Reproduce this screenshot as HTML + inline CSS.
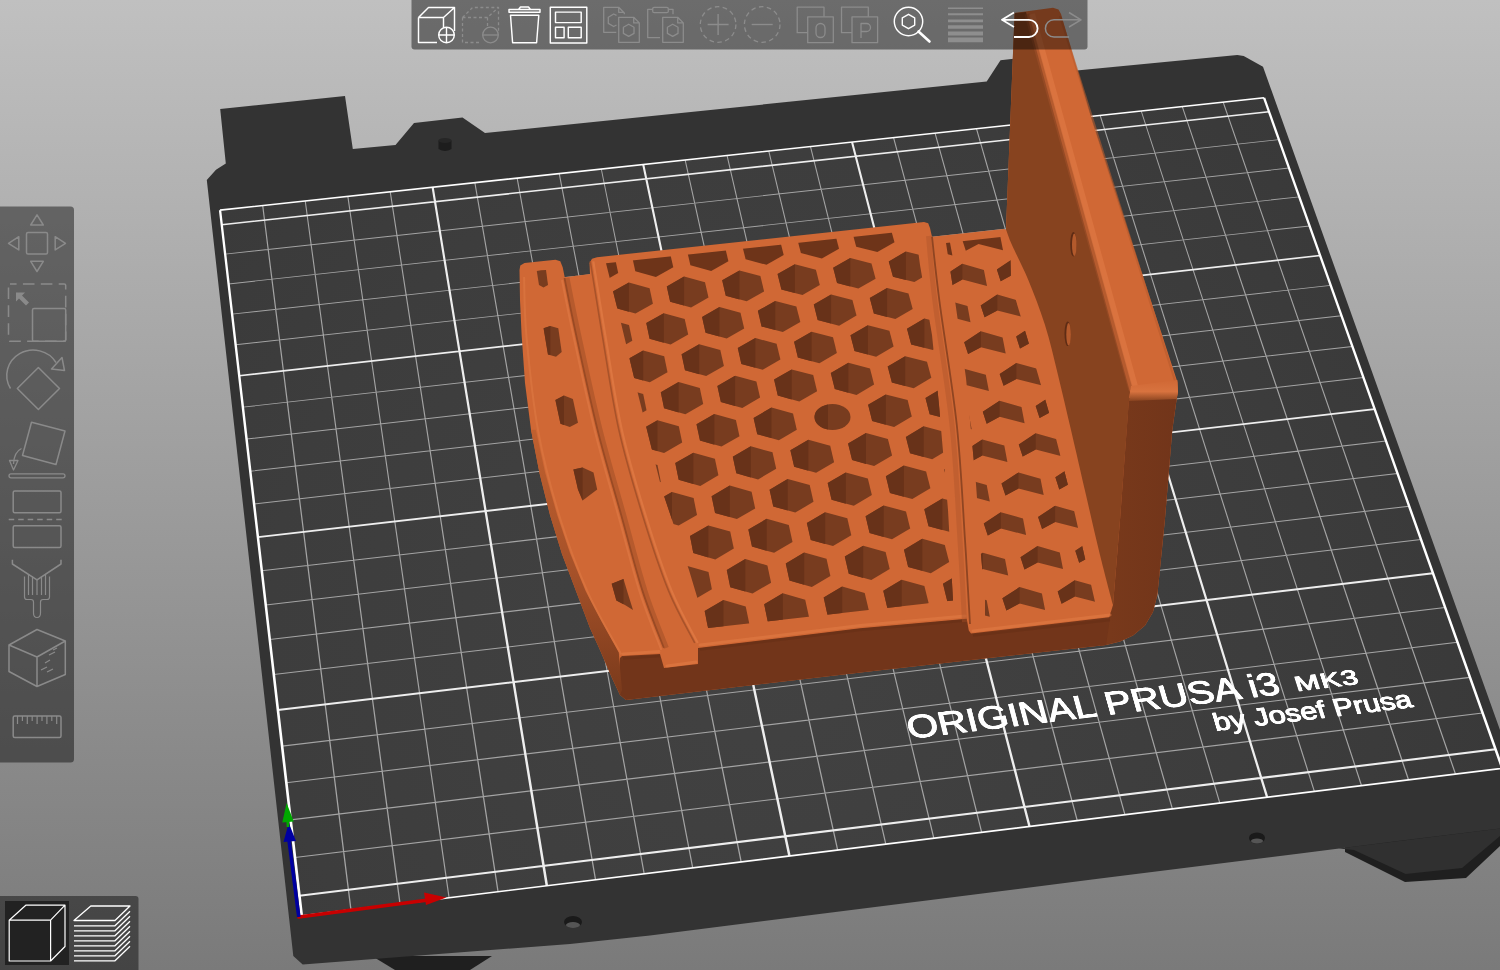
<!DOCTYPE html>
<html><head><meta charset="utf-8"><style>
html,body{margin:0;padding:0;width:1500px;height:970px;overflow:hidden;background:#9d9d9d;font-family:"Liberation Sans",sans-serif;}
#wrap{position:relative;width:1500px;height:970px;}
</style></head><body><div id="wrap">
<svg width="1500" height="970" viewBox="0 0 1500 970" style="position:absolute;left:0;top:0">
<defs><linearGradient id="bg" x1="0" y1="0" x2="0" y2="1"><stop offset="0" stop-color="#c0c0c0"/><stop offset="1" stop-color="#7a7a7a"/></linearGradient></defs>
<rect width="1500" height="970" fill="url(#bg)"/>
<polygon points="1345,852 1405,882 1466,878 1500,846 1500,820 1345,840" fill="#1f1f1f"/>
<polygon points="1338.7,848.5 1500,828.4 1500,836 1462,868 1405.7,874 1354,850" fill="#303030"/>
<polygon points="372,956 395,970 470,970 492,956" fill="#1f1f1f"/>
<polygon points="206.8,180.0 216.0,169.7 225.8,163.5 220.2,108.9 345.0,96.0 352.8,149.0 395.5,145.0 414.0,122.9 462.5,117.5 485.0,133.0 986.7,81.6 1000.5,60.3 1030.0,57.0 1030.0,75.0 1237.3,55.0 1243.7,56.0 1263.0,66.7 1500.0,730.0 1500.0,828.4 1400.0,840.7 1300.0,853.6 1100.0,878.5 650.0,935.5 570.0,944.0 302.7,964.5 293.3,956.0" fill="#333333"/>
<defs><radialGradient id="surfg" gradientUnits="userSpaceOnUse" cx="760" cy="640" r="820"><stop offset="0" stop-color="#424242"/><stop offset="0.6" stop-color="#3d3d3d"/><stop offset="1" stop-color="#383838"/></radialGradient></defs>
<polygon points="301.7,915.9 1502.3,768.3 1264.0,97.7 220.0,210.1" fill="url(#surfg)"/>
<path d="M350.3,909.9 L351.6,909.8 L263.3,205.5 L262.1,205.6Z M399.4,903.9 L400.7,903.7 L305.8,200.9 L304.7,201.0Z M448.5,897.8 L449.7,897.7 L348.4,196.3 L347.3,196.4Z M497.4,891.8 L498.7,891.7 L390.8,191.7 L389.7,191.9Z M594.9,879.8 L596.2,879.7 L475.4,182.6 L474.3,182.8Z M643.6,873.9 L644.8,873.7 L517.7,178.1 L516.6,178.2Z M692.1,867.9 L693.3,867.8 L559.8,173.6 L558.7,173.7Z M740.5,862.0 L741.8,861.8 L601.8,169.0 L600.8,169.1Z M837.0,850.1 L838.3,849.9 L685.7,160.0 L684.6,160.1Z M885.2,844.2 L886.4,844.0 L727.6,155.5 L726.5,155.6Z M933.2,838.3 L934.4,838.1 L769.3,151.0 L768.2,151.1Z M981.1,832.4 L982.3,832.2 L811.0,146.5 L809.9,146.6Z M1076.6,820.6 L1077.9,820.5 L894.1,137.6 L893.0,137.7Z M1124.3,814.8 L1125.5,814.6 L935.6,133.1 L934.5,133.2Z M1171.8,809.0 L1173.0,808.8 L977.0,128.6 L975.9,128.8Z M1219.2,803.1 L1220.4,803.0 L1018.3,124.2 L1017.2,124.3Z M1313.8,791.5 L1315.0,791.4 L1100.7,115.3 L1099.6,115.4Z M1360.9,785.7 L1362.1,785.6 L1141.7,110.9 L1140.7,111.0Z M1407.9,779.9 L1409.2,779.8 L1182.8,106.5 L1181.7,106.6Z M1454.9,774.2 L1456.1,774.0 L1223.7,102.1 L1222.6,102.2Z M295.0,858.1 L1482.9,713.6 L1482.5,712.5 L294.9,857.0Z M290.7,820.4 L1470.2,677.9 L1469.8,676.8 L290.5,819.3Z M286.4,783.3 L1457.7,642.7 L1457.3,641.7 L286.2,782.2Z M282.1,746.7 L1445.3,608.0 L1445.0,607.0 L282.0,745.6Z M273.8,675.0 L1421.2,540.0 L1420.8,539.0 L273.7,674.0Z M269.8,640.0 L1409.4,506.7 L1409.0,505.7 L269.7,638.9Z M265.8,605.4 L1397.7,473.9 L1397.3,472.9 L265.7,604.4Z M261.8,571.3 L1386.2,441.5 L1385.8,440.5 L261.7,570.3Z M254.1,504.5 L1363.6,378.0 L1363.3,377.0 L254.0,503.5Z M250.3,471.7 L1352.6,346.9 L1352.2,345.9 L250.2,470.8Z M246.6,439.5 L1341.7,316.2 L1341.3,315.2 L246.5,438.5Z M242.9,407.6 L1330.9,285.8 L1330.6,284.9 L242.8,406.7Z M235.7,345.2 L1309.8,226.4 L1309.5,225.5 L235.6,344.3Z M232.1,314.6 L1299.4,197.3 L1299.1,196.4 L232.0,313.7Z M228.6,284.4 L1289.2,168.5 L1288.9,167.6 L228.5,283.5Z M225.2,254.6 L1279.1,140.1 L1278.8,139.2 L225.1,253.7Z" fill="#a4a4a4"/>
<path d="M545.6,885.9 L548.1,885.6 L433.7,187.1 L431.6,187.4Z M788.2,856.1 L790.7,855.8 L644.3,164.5 L642.2,164.7Z M1028.3,826.6 L1030.7,826.3 L853.1,142.0 L851.0,142.2Z M1266.0,797.4 L1268.3,797.1 L1060.0,119.7 L1057.9,119.9Z M299.5,896.8 L1495.9,750.3 L1495.2,748.3 L299.3,894.7Z M278.0,711.1 L1433.3,574.2 L1432.7,572.3 L277.8,709.1Z M258.0,538.1 L1375.0,409.9 L1374.3,408.2 L257.8,536.2Z M239.3,376.6 L1320.4,256.3 L1319.8,254.7 L239.1,374.9Z M221.8,225.5 L1269.2,112.4 L1268.7,110.9 L221.6,223.9Z" fill="#eeeeee"/>
<path d="M300.4,916.1 L303.1,915.7 L221.2,210.0 L218.9,210.3Z M1501.0,768.5 L1503.6,768.2 L1265.2,97.6 L1262.9,97.9Z M301.8,916.7 L1502.6,769.1 L1502.0,767.6 L301.6,915.1Z M220.1,210.9 L1264.3,98.5 L1263.8,97.0 L219.9,209.3Z" fill="#ffffff"/>
<ellipse cx="573" cy="922" rx="9" ry="6" fill="#1a1a1a"/><ellipse cx="573" cy="925" rx="7" ry="3" fill="#555"/>
<ellipse cx="1257" cy="838" rx="8" ry="5.5" fill="#1a1a1a"/><ellipse cx="1257" cy="841" rx="6" ry="2.5" fill="#555"/>
<path d="M438.5,140.5 V149 Q445,153 451.5,149 V140.5Z" fill="#1d1d1d"/><ellipse cx="445" cy="140.5" rx="6.5" ry="2.6" fill="#262626"/>
<path d="M298.8,917 L432,899.5" stroke="#c80000" stroke-width="3.6" stroke-linecap="round"/>
<polygon points="424,892.5 446.5,897.5 426,905" fill="#c80000"/>
<path d="M298.8,917 L288.75,838" stroke="#0000a0" stroke-width="3.6"/>
<polygon points="283.5,842 288.75,823 296,841" fill="#0000a0"/>
<path d="M288,827 L287.5,819" stroke="#00a800" stroke-width="2.6"/>
<polygon points="282.3,822.5 286.6,803 293.8,821.5" fill="#00a800"/>
<defs>
<clipPath id="mainclip"><polygon points="606.0,263.3 903.0,231.6 918.0,250.0 920.0,265.0 932.0,335.0 939.0,405.0 948.0,510.0 953.0,600.5 708.0,628.0 704.0,620.0 689.0,570.0 662.0,490.0 638.0,394.0 621.0,323.0"/></clipPath>
<clipPath id="chevclip"><polygon points="1010.0,236.0 1011.0,284.0 1032.0,354.0 1052.0,423.0 1070.5,495.0 1087.0,567.0 1098.0,615.0 985.0,628.0 985.0,600.0 981.0,555.0 976.0,484.0 966.0,378.0 955.5,304.0 946.0,243.0"/></clipPath>
<linearGradient id="rwall" gradientUnits="userSpaceOnUse" x1="1110" y1="0" x2="1176" y2="0"><stop offset="0" stop-color="#78391b"/><stop offset="1" stop-color="#72351a"/></linearGradient>
<linearGradient id="pledge" x1="0" y1="0" x2="1" y2="0"><stop offset="0" stop-color="#a0502a"/><stop offset="0.6" stop-color="#e07a45"/><stop offset="1" stop-color="#d8713d"/></linearGradient>
<linearGradient id="pfront" x1="0" y1="0" x2="0" y2="1"><stop offset="0" stop-color="#d06835"/><stop offset="0.55" stop-color="#d8733f"/><stop offset="1" stop-color="#8a4420"/></linearGradient>
<linearGradient id="railwall" gradientUnits="userSpaceOnUse" x1="0" y1="430" x2="0" y2="690"><stop offset="0" stop-color="#c0602f"/><stop offset="0.55" stop-color="#a55129"/><stop offset="1" stop-color="#7c3b1c"/></linearGradient>
</defs>
<polygon points="519.5,270.0 520.3,265.5 524.5,263.0 555.5,259.8 560.3,261.2 562.7,267.3 564.7,277.3 590.0,274.0 589.5,263.0 592.0,258.7 597.0,257.2 924.0,222.0 928.2,223.3 930.0,228.0 932.0,236.7 1003.4,229.0 1006.0,229.5 1014.6,13.0 1053.0,7.8 1058.5,9.5 1061.0,14.0 1092.0,120.0 1177.4,382.0 1178.0,392.0 1176.8,398.0 1172.3,430.0 1164.9,519.7 1157.4,594.6 1153.0,612.0 1145.0,625.5 1133.0,635.5 1120.0,641.5 1106.0,645.0 880.0,670.3 626.0,700.0 620.0,695.0 612.0,678.0 600.0,650.0 590.0,628.0 576.0,590.9 562.0,554.0 550.0,515.0 539.5,473.0 531.0,429.7 525.0,383.0 521.6,334.8 520.0,300.0" fill="#d06835" />
<path d="M1006,229.5 L1014.6,13 L1026,12 L1130,392 L1129,400 L1120,520 L1113,605  C1110.8,596.7 1104.5,573.3 1100.0,555.0 C1095.5,536.7 1090.8,515.8 1086.0,495.0 C1081.2,474.2 1075.7,450.0 1071.0,430.0 C1066.3,410.0 1062.3,392.5 1058.0,375.0 C1053.7,357.5 1050.0,340.8 1045.0,325.0 C1040.0,309.2 1033.8,293.3 1028.3,280.0 C1022.8,266.7 1015.7,253.4 1012.0,245.0 C1008.3,236.6 1007.0,232.1 1006.0,229.5Z" fill="#87431f"/>
<polygon points="1129.0,398.0 1176.8,398.0 1172.3,430.0 1164.9,519.7 1157.4,594.6 1153.0,612.0 1145.0,625.5 1133.0,635.5 1120.0,641.5 1106.0,645.0 1100.0,646.0 1111.0,611.5 1113.0,605.0 1120.0,520.0" fill="url(#rwall)" />
<path d="M1027,14 L1131,390" stroke="#a2512a" stroke-width="5" opacity="0.55"/>
<path d="M1032,14 L1136,390" stroke="#e27b46" stroke-width="6" opacity="0.6"/>
<path d="M1060,16 L1176,384" stroke="#b95c2d" stroke-width="2.2" opacity="0.6"/>
<polygon points="1131.0,386.0 1177.4,380.0 1178.0,392.0 1176.8,399.0 1129.0,401.0" fill="url(#pfront)" />
<ellipse cx="1073.4" cy="244.2" rx="3.2" ry="12.3" fill="#5e2c15"/><ellipse cx="1074.3" cy="244.8" rx="2.3" ry="11.2" fill="#b35a2c"/>
<ellipse cx="1067.7" cy="333.7" rx="3.2" ry="12.3" fill="#5e2c15"/><ellipse cx="1068.6" cy="334.3" rx="2.3" ry="11.2" fill="#b35a2c"/>
<polygon points="626.0,700.0 620.0,695.0 618.0,680.0 620.0,658.0 622.0,656.0 660.0,654.0 664.0,668.0 698.0,664.0 698.0,648.0 860.0,628.3 966.7,618.7 968.8,630.4 971.0,633.6 1111.0,617.0 1111.0,611.5 1106.0,645.0 880.0,670.3" fill="#72351a" />
<path d="M700,645 L860,625.5 L965,616 M623,654 L659,651.5 M667,666 L696,662 M973,631 L1110,615" fill="none" stroke="#e27b46" stroke-width="3" opacity="0.55" stroke-linecap="round"/>
<path d="M700,649.5 L860,630 L966,620.5 M623,658.5 L660,656 M973,635.5 L1110,620" fill="none" stroke="#5e2b14" stroke-width="2.5" opacity="0.35"/>
<polygon points="531.0,429.7 539.5,473.0 550.0,515.0 562.0,554.0 576.0,590.9 590.0,628.0 600.0,650.0 612.0,678.0 620.0,695.0 622.0,690.0 620.0,668.0 618.8,652.5 602.0,622.0 585.6,590.9 570.0,553.0 557.2,515.0 545.0,472.0 535.8,429.7" fill="url(#railwall)" />
<polygon points="536.8,271.0 541.0,270.2 546.0,270.0 548.0,285.0 543.5,287.5 539.0,285.0" fill="#783c1f" />
<polygon points="550.4,326.0 558.3,328.3 561.7,352.0 556.0,356.7 548.0,354.4 543.6,328.3" fill="#783c1f" /><polygon points="550.4,326.0 550.4,355.1 548.0,354.4 543.6,328.3" fill="#683219" />
<polygon points="564.0,395.6 572.9,399.0 578.0,422.8 569.8,426.9 560.5,423.8 555.4,400.0" fill="#783c1f" /><polygon points="564.0,395.6 564.0,425.0 560.5,423.8 555.4,400.0" fill="#683219" />
<polygon points="582.6,467.4 593.5,472.6 597.2,489.6 582.6,500.5 578.0,489.6 573.4,469.6" fill="#783c1f" /><polygon points="582.6,467.4 582.6,500.5 578.0,489.6 573.4,469.6" fill="#683219" />
<polygon points="623.5,579.0 628.0,594.0 633.0,610.0 625.0,605.0 616.4,600.4 611.7,583.8" fill="#783c1f" /><polygon points="623.5,579.0 623.5,604.2 616.4,600.4 611.7,583.8" fill="#683219" />
<path d="M567.0,278.0 C568.9,287.5 573.1,309.5 578.6,334.8 C584.1,360.1 592.5,399.7 600.0,429.7 C607.5,459.7 616.2,488.1 623.7,515.0 C631.2,541.9 637.9,568.8 645.0,590.9 C652.1,613.0 662.8,638.3 666.3,647.8" fill="none" stroke="#a04e26" stroke-width="5" opacity="0.55"/>
<path d="M564.5,278.0 C566.4,287.5 570.6,309.5 576.1,334.8 C581.6,360.1 590.0,399.7 597.5,429.7 C605.0,459.7 613.7,488.1 621.2,515.0 C628.7,541.9 635.4,568.8 642.5,590.9 C649.6,613.0 660.2,638.3 663.8,647.8" fill="none" stroke="#9a4a24" stroke-width="1.8"/>
<path d="M562.0,280.0 C563.9,289.5 568.1,311.5 573.6,336.8 C579.1,362.1 587.5,401.7 595.0,431.7 C602.5,461.7 611.2,490.1 618.7,517.0 C626.2,543.9 632.9,570.8 640.0,592.9 C647.1,615.0 657.8,640.3 661.3,649.8" fill="none" stroke="#dc7642" stroke-width="2" opacity="0.8"/>
<path d="M590.3,261.3 C592.3,273.6 597.5,306.7 602.2,334.8 C607.0,362.9 612.1,399.7 618.8,429.7 C625.5,459.7 634.2,488.1 642.5,515.0 C650.8,541.9 659.9,569.6 668.6,590.9 C677.3,612.2 690.4,634.3 694.7,643.0" fill="none" stroke="#a9532a" stroke-width="1.6"/>
<path d="M593.3,261.3 C595.3,273.6 600.5,306.7 605.2,334.8 C610.0,362.9 615.1,399.7 621.8,429.7 C628.5,459.7 637.2,488.1 645.5,515.0 C653.8,541.9 662.9,569.6 671.6,590.9 C680.3,612.2 693.4,634.3 697.7,643.0" fill="none" stroke="#de7843" stroke-width="2.2" opacity="0.9"/>
<path d="M524.1,277.0 C524.5,287.0 524.1,311.0 526.5,336.8 C528.9,362.6 532.8,401.7 538.3,431.7 C543.8,461.7 551.4,490.1 559.7,517.0 C568.0,543.9 577.8,570.0 588.1,592.9 C598.4,615.8 615.8,644.2 621.3,654.5" fill="none" stroke="#dc7642" stroke-width="2" opacity="0.7"/>
<g clip-path="url(#mainclip)"><polygon points="506.3,227.8 526.4,233.4 529.3,248.5 512.0,258.0 491.8,252.4 489.0,237.2" fill="#6e3419" /><polygon points="560.5,222.3 580.8,227.9 583.9,242.9 566.6,252.4 546.3,246.8 543.3,231.7" fill="#6e3419" /><polygon points="614.8,216.6 635.2,222.1 638.5,237.2 621.3,246.7 600.8,241.1 597.7,226.1" fill="#6e3419" /><polygon points="669.2,210.9 689.7,216.3 693.2,231.3 676.1,240.8 655.5,235.3 652.1,220.3" fill="#6e3419" /><polygon points="723.7,205.0 744.4,210.3 748.0,225.3 730.9,234.9 710.2,229.4 706.7,214.5" fill="#6e3419" /><polygon points="778.3,198.9 799.1,204.2 802.9,219.1 785.9,228.7 765.1,223.4 761.3,208.5" fill="#6e3419" /><polygon points="833.0,192.8 853.9,198.0 857.9,212.9 840.9,222.5 820.0,217.2 816.1,202.3" fill="#6e3419" /><polygon points="887.8,186.5 908.8,191.7 913.0,206.5 896.1,216.1 875.0,210.9 870.9,196.1" fill="#6e3419" /><polygon points="942.6,180.1 963.8,185.2 968.2,200.0 951.3,209.6 930.1,204.5 925.8,189.7" fill="#6e3419" /><polygon points="997.6,173.6 1018.8,178.6 1023.4,193.3 1006.6,203.0 985.3,197.9 980.9,183.2" fill="#6e3419" /><polygon points="539.8,257.9 560.2,263.6 563.2,278.9 545.8,288.6 525.4,282.8 522.4,267.5" fill="#6e3419" /><polygon points="594.5,252.3 615.0,257.9 618.2,273.1 600.8,282.8 580.3,277.1 577.2,261.8" fill="#6e3419" /><polygon points="649.2,246.4 669.8,252.0 673.3,267.2 655.9,276.9 635.3,271.3 632.0,256.0" fill="#6e3419" /><polygon points="704.1,240.5 724.8,246.0 728.4,261.2 711.2,270.9 690.4,265.3 686.9,250.1" fill="#6e3419" /><polygon points="759.0,234.5 779.9,239.9 783.7,255.0 766.5,264.8 745.6,259.3 741.9,244.1" fill="#6e3419" /><polygon points="814.1,228.3 835.1,233.6 839.0,248.7 821.9,258.5 800.9,253.1 797.0,237.9" fill="#6e3419" /><polygon points="869.2,222.0 890.3,227.2 894.5,242.3 877.4,252.1 856.2,246.7 852.2,231.7" fill="#6e3419" /><polygon points="924.4,215.5 945.6,220.7 950.0,235.7 933.0,245.6 911.7,240.3 907.5,225.2" fill="#6e3419" /><polygon points="979.7,209.0 1001.1,214.1 1005.6,229.1 988.7,238.9 967.3,233.7 962.9,218.7" fill="#6e3419" /><polygon points="1035.1,202.3 1056.6,207.4 1061.3,222.3 1044.4,232.2 1022.9,227.0 1018.3,212.0" fill="#6e3419" /><polygon points="518.8,294.1 539.2,299.9 542.2,315.4 524.5,325.2 504.1,319.4 501.2,303.8" fill="#783c1f" /><polygon points="518.8,294.1 518.8,323.6 504.1,319.4 501.2,303.8" fill="#683219" /><polygon points="573.8,288.4 594.4,294.1 597.5,309.6 580.0,319.4 559.3,313.6 556.3,298.1" fill="#783c1f" /><polygon points="573.8,288.4 573.8,317.7 559.3,313.6 556.3,298.1" fill="#683219" /><polygon points="628.9,282.6 649.6,288.2 652.9,303.7 635.5,313.5 614.7,307.8 611.5,292.3" fill="#783c1f" /><polygon points="628.9,282.6 628.9,311.7 614.7,307.8 611.5,292.3" fill="#683219" /><polygon points="684.1,276.6 705.0,282.2 708.5,297.6 691.1,307.5 670.2,301.8 666.8,286.4" fill="#783c1f" /><polygon points="684.1,276.6 684.1,305.6 670.2,301.8 666.8,286.4" fill="#683219" /><polygon points="739.5,270.5 760.4,276.1 764.1,291.4 746.7,301.3 725.8,295.7 722.2,280.3" fill="#783c1f" /><polygon points="739.5,270.5 739.5,299.4 725.8,295.7 722.2,280.3" fill="#683219" /><polygon points="794.9,264.3 815.9,269.8 819.8,285.1 802.5,295.0 781.4,289.5 777.6,274.1" fill="#783c1f" /><polygon points="794.9,264.3 794.9,293.0 781.4,289.5 777.6,274.1" fill="#683219" /><polygon points="850.3,258.0 871.5,263.4 875.6,278.7 858.4,288.6 837.1,283.1 833.2,267.8" fill="#783c1f" /><polygon points="850.3,258.0 850.3,286.5 837.1,283.1 833.2,267.8" fill="#683219" /><polygon points="905.9,251.5 927.2,256.8 931.5,272.1 914.4,282.1 893.0,276.7 888.8,261.4" fill="#783c1f" /><polygon points="905.9,251.5 905.9,279.9 893.0,276.7 888.8,261.4" fill="#683219" /><polygon points="961.6,244.9 983.0,250.2 987.5,265.4 970.4,275.4 948.9,270.0 944.5,254.8" fill="#783c1f" /><polygon points="961.6,244.9 961.6,273.2 948.9,270.0 944.5,254.8" fill="#683219" /><polygon points="1017.3,238.2 1038.9,243.4 1043.6,258.6 1026.5,268.6 1004.9,263.3 1000.4,248.1" fill="#783c1f" /><polygon points="1017.3,238.2 1017.3,266.4 1004.9,263.3 1000.4,248.1" fill="#683219" /><polygon points="552.8,325.1 573.4,330.9 576.5,346.7 558.7,356.6 538.0,350.7 535.1,334.9" fill="#783c1f" /><polygon points="552.8,325.1 552.8,354.9 538.0,350.7 535.1,334.9" fill="#683219" /><polygon points="608.3,319.2 629.0,325.0 632.3,340.7 614.6,350.7 593.8,344.8 590.7,329.1" fill="#783c1f" /><polygon points="608.3,319.2 608.3,348.9 593.8,344.8 590.7,329.1" fill="#683219" /><polygon points="663.8,313.3 684.7,319.0 688.2,334.6 670.6,344.6 649.6,338.8 646.3,323.1" fill="#783c1f" /><polygon points="663.8,313.3 663.8,342.7 649.6,338.8 646.3,323.1" fill="#683219" /><polygon points="719.5,307.1 740.5,312.8 744.2,328.4 726.7,338.4 705.6,332.7 702.1,317.1" fill="#783c1f" /><polygon points="719.5,307.1 719.5,336.5 705.6,332.7 702.1,317.1" fill="#683219" /><polygon points="775.3,300.9 796.4,306.5 800.3,322.1 782.8,332.1 761.6,326.5 757.9,310.8" fill="#783c1f" /><polygon points="775.3,300.9 775.3,330.1 761.6,326.5 757.9,310.8" fill="#683219" /><polygon points="831.1,294.6 852.4,300.1 856.5,315.6 839.1,325.7 817.7,320.1 813.8,304.5" fill="#783c1f" /><polygon points="831.1,294.6 831.1,323.6 817.7,320.1 813.8,304.5" fill="#683219" /><polygon points="887.1,288.1 908.5,293.5 912.7,309.0 895.4,319.1 873.9,313.6 869.8,298.0" fill="#783c1f" /><polygon points="887.1,288.1 887.1,317.0 873.9,313.6 869.8,298.0" fill="#683219" /><polygon points="943.1,281.5 964.7,286.8 969.1,302.3 951.8,312.4 930.2,307.0 925.9,291.5" fill="#783c1f" /><polygon points="943.1,281.5 943.1,310.2 930.2,307.0 925.9,291.5" fill="#683219" /><polygon points="999.3,274.7 1020.9,280.0 1025.5,295.5 1008.3,305.6 986.6,300.2 982.1,284.7" fill="#783c1f" /><polygon points="999.3,274.7 999.3,303.4 986.6,300.2 982.1,284.7" fill="#683219" /><polygon points="1055.5,267.8 1077.3,273.1 1082.1,288.5 1065.0,298.7 1043.1,293.3 1038.4,277.9" fill="#783c1f" /><polygon points="1055.5,267.8 1055.5,296.4 1043.1,293.3 1038.4,277.9" fill="#683219" /><polygon points="531.3,362.3 552.1,368.2 555.0,384.2 537.1,394.3 516.3,388.3 513.5,372.3" fill="#783c1f" /><polygon points="531.3,362.3 531.3,392.6 516.3,388.3 513.5,372.3" fill="#683219" /><polygon points="587.2,356.4 608.1,362.3 611.2,378.3 593.4,388.3 572.5,382.4 569.4,366.4" fill="#783c1f" /><polygon points="587.2,356.4 587.2,386.6 572.5,382.4 569.4,366.4" fill="#683219" /><polygon points="643.2,350.4 664.2,356.3 667.5,372.2 649.8,382.3 628.7,376.4 625.5,360.4" fill="#783c1f" /><polygon points="643.2,350.4 643.2,380.4 628.7,376.4 625.5,360.4" fill="#683219" /><polygon points="699.2,344.3 720.3,350.1 723.9,365.9 706.2,376.1 685.0,370.2 681.6,354.3" fill="#783c1f" /><polygon points="699.2,344.3 699.2,374.2 685.0,370.2 681.6,354.3" fill="#683219" /><polygon points="755.4,338.1 776.6,343.8 780.4,359.6 762.7,369.8 741.4,364.0 737.8,348.1" fill="#783c1f" /><polygon points="755.4,338.1 755.4,367.8 741.4,364.0 737.8,348.1" fill="#683219" /><polygon points="811.6,331.7 833.0,337.3 836.9,353.1 819.4,363.3 797.9,357.6 794.1,341.8" fill="#783c1f" /><polygon points="811.6,331.7 811.6,361.2 797.9,357.6 794.1,341.8" fill="#683219" /><polygon points="867.9,325.2 889.4,330.7 893.6,346.5 876.1,356.7 854.5,351.1 850.5,335.3" fill="#783c1f" /><polygon points="867.9,325.2 867.9,354.6 854.5,351.1 850.5,335.3" fill="#683219" /><polygon points="924.4,318.5 946.0,324.1 950.3,339.8 932.9,350.0 911.2,344.4 907.0,328.7" fill="#783c1f" /><polygon points="924.4,318.5 924.4,347.8 911.2,344.4 907.0,328.7" fill="#683219" /><polygon points="980.9,311.8 1002.6,317.2 1007.2,332.9 989.8,343.2 968.0,337.7 963.6,322.0" fill="#783c1f" /><polygon points="980.9,311.8 980.9,340.9 968.0,337.7 963.6,322.0" fill="#683219" /><polygon points="1037.5,304.9 1059.4,310.3 1064.1,326.0 1046.8,336.3 1024.9,330.8 1020.2,315.1" fill="#783c1f" /><polygon points="1037.5,304.9 1037.5,333.9 1024.9,330.8 1020.2,315.1" fill="#683219" /><polygon points="565.8,394.2 586.7,400.2 589.8,416.3 571.8,426.5 550.8,420.5 547.8,404.3" fill="#783c1f" /><polygon points="565.8,394.2 565.8,424.8 550.8,420.5 547.8,404.3" fill="#683219" /><polygon points="622.1,388.1 643.2,394.1 646.5,410.2 628.5,420.5 607.4,414.5 604.2,398.3" fill="#783c1f" /><polygon points="622.1,388.1 622.1,418.6 607.4,414.5 604.2,398.3" fill="#683219" /><polygon points="678.6,382.0 699.8,387.9 703.2,404.0 685.4,414.3 664.1,408.3 660.8,392.2" fill="#783c1f" /><polygon points="678.6,382.0 678.6,412.4 664.1,408.3 660.8,392.2" fill="#683219" /><polygon points="735.1,375.7 756.4,381.6 760.1,397.6 742.3,407.9 720.9,402.0 717.4,385.9" fill="#783c1f" /><polygon points="735.1,375.7 735.1,405.9 720.9,402.0 717.4,385.9" fill="#683219" /><polygon points="791.7,369.4 813.2,375.1 817.1,391.2 799.3,401.5 777.8,395.6 774.1,379.6" fill="#783c1f" /><polygon points="791.7,369.4 791.7,399.4 777.8,395.6 774.1,379.6" fill="#683219" /><polygon points="848.4,362.8 870.0,368.5 874.1,384.5 856.5,394.9 834.8,389.1 830.8,373.1" fill="#783c1f" /><polygon points="848.4,362.8 848.4,392.7 834.8,389.1 830.8,373.1" fill="#683219" /><polygon points="905.2,356.2 927.0,361.8 931.3,377.8 913.7,388.2 891.9,382.5 887.7,366.5" fill="#783c1f" /><polygon points="905.2,356.2 905.2,386.0 891.9,382.5 887.7,366.5" fill="#683219" /><polygon points="962.1,349.4 984.0,355.0 988.5,370.9 971.0,381.3 949.0,375.7 944.7,359.7" fill="#783c1f" /><polygon points="962.1,349.4 962.1,379.1 949.0,375.7 944.7,359.7" fill="#683219" /><polygon points="1019.1,342.5 1041.1,348.0 1045.8,363.9 1028.4,374.4 1006.3,368.8 1001.7,352.8" fill="#783c1f" /><polygon points="1019.1,342.5 1019.1,372.0 1006.3,368.8 1001.7,352.8" fill="#683219" /><polygon points="1076.2,335.5 1098.3,341.0 1103.2,356.8 1085.9,367.3 1063.7,361.8 1058.9,345.8" fill="#783c1f" /><polygon points="1076.2,335.5 1076.2,364.9 1063.7,361.8 1058.9,345.8" fill="#683219" /><polygon points="543.9,432.4 565.0,438.5 567.9,454.9 549.7,465.3 528.6,459.1 525.8,442.6" fill="#783c1f" /><polygon points="543.9,432.4 543.9,463.6 528.6,459.1 525.8,442.6" fill="#683219" /><polygon points="600.7,426.4 621.8,432.4 625.0,448.8 606.9,459.2 585.6,453.0 582.6,436.6" fill="#783c1f" /><polygon points="600.7,426.4 600.7,457.4 585.6,453.0 582.6,436.6" fill="#683219" /><polygon points="657.5,420.2 678.8,426.2 682.2,442.6 664.1,453.0 642.8,446.9 639.5,430.5" fill="#783c1f" /><polygon points="657.5,420.2 657.5,451.1 642.8,446.9 639.5,430.5" fill="#683219" /><polygon points="714.4,414.0 735.9,419.9 739.5,436.2 721.5,446.6 700.0,440.6 696.5,424.3" fill="#783c1f" /><polygon points="714.4,414.0 714.4,444.7 700.0,440.6 696.5,424.3" fill="#683219" /><polygon points="771.5,407.6 793.0,413.4 796.8,429.7 778.9,440.2 757.3,434.2 753.6,417.9" fill="#783c1f" /><polygon points="771.5,407.6 771.5,438.1 757.3,434.2 753.6,417.9" fill="#683219" /><polygon points="885.8,394.4 907.6,400.1 911.8,416.4 894.1,426.9 872.2,421.0 868.1,404.8" fill="#783c1f" /><polygon points="885.8,394.4 885.8,424.7 872.2,421.0 868.1,404.8" fill="#683219" /><polygon points="943.1,387.6 965.1,393.3 969.5,409.5 951.8,420.0 929.7,414.2 925.5,398.0" fill="#783c1f" /><polygon points="943.1,387.6 943.1,417.7 929.7,414.2 925.5,398.0" fill="#683219" /><polygon points="1000.5,380.7 1022.6,386.3 1027.2,402.5 1009.6,413.1 987.4,407.3 982.9,391.1" fill="#783c1f" /><polygon points="1000.5,380.7 1000.5,410.7 987.4,407.3 982.9,391.1" fill="#683219" /><polygon points="1057.9,373.7 1080.2,379.2 1085.0,395.4 1067.5,406.0 1045.2,400.3 1040.5,384.1" fill="#783c1f" /><polygon points="1057.9,373.7 1057.9,403.5 1045.2,400.3 1040.5,384.1" fill="#683219" /><polygon points="578.8,465.1 600.1,471.3 603.2,487.9 584.8,498.4 563.5,492.2 560.6,475.5" fill="#783c1f" /><polygon points="578.8,465.1 578.8,496.6 563.5,492.2 560.6,475.5" fill="#683219" /><polygon points="636.1,459.0 657.5,465.1 660.8,481.7 642.5,492.2 621.0,486.0 617.9,469.4" fill="#783c1f" /><polygon points="636.1,459.0 636.1,490.3 621.0,486.0 617.9,469.4" fill="#683219" /><polygon points="693.4,452.7 714.9,458.8 718.4,475.3 700.3,485.9 678.7,479.7 675.3,463.1" fill="#783c1f" /><polygon points="693.4,452.7 693.4,483.9 678.7,479.7 675.3,463.1" fill="#683219" /><polygon points="750.8,446.3 772.5,452.3 776.2,468.8 758.1,479.4 736.4,473.3 732.8,456.8" fill="#783c1f" /><polygon points="750.8,446.3 750.8,477.4 736.4,473.3 732.8,456.8" fill="#683219" /><polygon points="808.4,439.8 830.2,445.7 834.1,462.2 816.1,472.8 794.2,466.8 790.4,450.3" fill="#783c1f" /><polygon points="808.4,439.8 808.4,470.7 794.2,466.8 790.4,450.3" fill="#683219" /><polygon points="866.0,433.1 887.9,439.0 892.1,455.5 874.1,466.1 852.1,460.1 848.1,443.6" fill="#783c1f" /><polygon points="866.0,433.1 866.0,463.9 852.1,460.1 848.1,443.6" fill="#683219" /><polygon points="923.7,426.3 945.8,432.2 950.1,448.6 932.2,459.2 910.1,453.3 905.9,436.9" fill="#783c1f" /><polygon points="923.7,426.3 923.7,457.0 910.1,453.3 905.9,436.9" fill="#683219" /><polygon points="981.5,419.4 1003.7,425.2 1008.3,441.6 990.5,452.3 968.2,446.4 963.7,430.0" fill="#783c1f" /><polygon points="981.5,419.4 981.5,449.9 968.2,446.4 963.7,430.0" fill="#683219" /><polygon points="1039.4,412.4 1061.7,418.1 1066.5,434.5 1048.8,445.2 1026.3,439.4 1021.7,423.0" fill="#783c1f" /><polygon points="1039.4,412.4 1039.4,442.8 1026.3,439.4 1021.7,423.0" fill="#683219" /><polygon points="1097.3,405.2 1119.8,410.9 1124.8,427.2 1107.2,438.0 1084.6,432.2 1079.8,415.9" fill="#783c1f" /><polygon points="1097.3,405.2 1097.3,435.5 1084.6,432.2 1079.8,415.9" fill="#683219" /><polygon points="556.5,504.4 577.9,510.7 580.9,527.6 562.3,538.1 540.9,531.8 538.1,514.9" fill="#783c1f" /><polygon points="556.5,504.4 556.5,536.4 540.9,531.8 538.1,514.9" fill="#683219" /><polygon points="614.2,498.3 635.7,504.5 638.9,521.3 620.4,531.9 598.9,525.6 595.8,508.8" fill="#783c1f" /><polygon points="614.2,498.3 614.2,530.1 598.9,525.6 595.8,508.8" fill="#683219" /><polygon points="672.0,492.0 693.6,498.1 697.0,515.0 678.6,525.6 656.9,519.4 653.7,502.5" fill="#783c1f" /><polygon points="672.0,492.0 672.0,523.7 656.9,519.4 653.7,502.5" fill="#683219" /><polygon points="729.8,485.6 751.6,491.7 755.2,508.5 736.9,519.1 715.1,512.9 711.6,496.2" fill="#783c1f" /><polygon points="729.8,485.6 729.8,517.1 715.1,512.9 711.6,496.2" fill="#683219" /><polygon points="787.7,479.0 809.7,485.1 813.5,501.8 795.3,512.6 773.3,506.4 769.6,489.7" fill="#783c1f" /><polygon points="787.7,479.0 787.7,510.5 773.3,506.4 769.6,489.7" fill="#683219" /><polygon points="845.8,472.4 867.8,478.4 871.9,495.1 853.8,505.8 831.6,499.8 827.7,483.0" fill="#783c1f" /><polygon points="845.8,472.4 845.8,503.7 831.6,499.8 827.7,483.0" fill="#683219" /><polygon points="903.9,465.6 926.1,471.5 930.4,488.2 912.3,499.0 890.0,493.0 885.9,476.3" fill="#783c1f" /><polygon points="903.9,465.6 903.9,496.7 890.0,493.0 885.9,476.3" fill="#683219" /><polygon points="962.1,458.7 984.4,464.6 988.9,481.2 971.0,492.0 948.6,486.1 944.2,469.4" fill="#783c1f" /><polygon points="962.1,458.7 962.1,489.7 948.6,486.1 944.2,469.4" fill="#683219" /><polygon points="1020.4,451.7 1042.9,457.5 1047.6,474.1 1029.7,485.0 1007.1,479.0 1002.6,462.4" fill="#783c1f" /><polygon points="1020.4,451.7 1020.4,482.5 1007.1,479.0 1002.6,462.4" fill="#683219" /><polygon points="1078.8,444.5 1101.4,450.3 1106.3,466.9 1088.5,477.7 1065.8,471.9 1061.1,455.3" fill="#783c1f" /><polygon points="1078.8,444.5 1078.8,475.2 1065.8,471.9 1061.1,455.3" fill="#683219" /><polygon points="591.9,538.0 613.5,544.4 616.6,561.4 597.9,572.2 576.3,565.8 573.3,548.7" fill="#783c1f" /><polygon points="591.9,538.0 591.9,570.4 576.3,565.8 573.3,548.7" fill="#683219" /><polygon points="650.1,531.8 671.8,538.1 675.1,555.1 656.6,565.9 634.8,559.5 631.6,542.4" fill="#783c1f" /><polygon points="650.1,531.8 650.1,564.0 634.8,559.5 631.6,542.4" fill="#683219" /><polygon points="708.4,525.4 730.2,531.6 733.8,548.6 715.3,559.4 693.3,553.1 690.0,536.1" fill="#783c1f" /><polygon points="708.4,525.4 708.4,557.4 693.3,553.1 690.0,536.1" fill="#683219" /><polygon points="766.7,518.8 788.8,525.0 792.5,542.0 774.1,552.8 752.0,546.6 748.4,529.6" fill="#783c1f" /><polygon points="766.7,518.8 766.7,550.7 752.0,546.6 748.4,529.6" fill="#683219" /><polygon points="825.2,512.2 847.3,518.3 851.3,535.3 833.0,546.1 810.8,539.9 806.9,522.9" fill="#783c1f" /><polygon points="825.2,512.2 825.2,543.9 810.8,539.9 806.9,522.9" fill="#683219" /><polygon points="883.7,505.4 906.0,511.5 910.2,528.4 892.0,539.3 869.6,533.1 865.6,516.2" fill="#783c1f" /><polygon points="883.7,505.4 883.7,537.0 869.6,533.1 865.6,516.2" fill="#683219" /><polygon points="942.4,498.5 964.8,504.5 969.2,521.4 951.1,532.3 928.6,526.2 924.3,509.3" fill="#783c1f" /><polygon points="942.4,498.5 942.4,530.0 928.6,526.2 924.3,509.3" fill="#683219" /><polygon points="1001.1,491.5 1023.7,497.4 1028.3,514.3 1010.2,525.3 987.6,519.2 983.1,502.3" fill="#783c1f" /><polygon points="1001.1,491.5 1001.1,522.8 987.6,519.2 983.1,502.3" fill="#683219" /><polygon points="1059.9,484.3 1082.6,490.2 1087.5,507.1 1069.5,518.1 1046.7,512.1 1042.0,495.2" fill="#783c1f" /><polygon points="1059.9,484.3 1059.9,515.5 1046.7,512.1 1042.0,495.2" fill="#683219" /><polygon points="1118.8,477.0 1141.7,482.9 1146.8,499.7 1128.9,510.7 1105.9,504.8 1101.0,487.9" fill="#783c1f" /><polygon points="1118.8,477.0 1118.8,508.1 1105.9,504.8 1101.0,487.9" fill="#683219" /><polygon points="569.2,578.3 590.9,584.8 593.9,602.1 575.0,612.9 553.2,606.4 550.4,589.1" fill="#783c1f" /><polygon points="569.2,578.3 569.2,611.2 553.2,606.4 550.4,589.1" fill="#683219" /><polygon points="627.8,572.1 649.6,578.5 652.8,595.7 634.1,606.6 612.2,600.1 609.1,582.8" fill="#783c1f" /><polygon points="627.8,572.1 627.8,604.8 612.2,600.1 609.1,582.8" fill="#683219" /><polygon points="686.5,565.7 708.5,572.0 711.9,589.3 693.2,600.2 671.2,593.7 667.9,576.5" fill="#783c1f" /><polygon points="686.5,565.7 686.5,598.2 671.2,593.7 667.9,576.5" fill="#683219" /><polygon points="745.3,559.1 767.4,565.4 771.1,582.7 752.5,593.6 730.3,587.2 726.8,570.0" fill="#783c1f" /><polygon points="745.3,559.1 745.3,591.5 730.3,587.2 726.8,570.0" fill="#683219" /><polygon points="804.2,552.5 826.5,558.7 830.4,575.9 811.8,586.9 789.5,580.6 785.8,563.4" fill="#783c1f" /><polygon points="804.2,552.5 804.2,584.8 789.5,580.6 785.8,563.4" fill="#683219" /><polygon points="863.2,545.7 885.6,551.9 889.7,569.1 871.3,580.1 848.8,573.8 844.8,556.6" fill="#783c1f" /><polygon points="863.2,545.7 863.2,577.9 848.8,573.8 844.8,556.6" fill="#683219" /><polygon points="922.3,538.8 944.8,545.0 949.2,562.1 930.8,573.2 908.2,566.9 904.0,549.8" fill="#783c1f" /><polygon points="922.3,538.8 922.3,570.8 908.2,566.9 904.0,549.8" fill="#683219" /><polygon points="981.4,531.8 1004.1,537.9 1008.7,555.0 990.4,566.1 967.6,559.9 963.2,542.8" fill="#783c1f" /><polygon points="981.4,531.8 981.4,563.7 967.6,559.9 963.2,542.8" fill="#683219" /><polygon points="1040.7,524.7 1063.5,530.7 1068.3,547.8 1050.1,558.9 1027.2,552.8 1022.6,535.7" fill="#783c1f" /><polygon points="1040.7,524.7 1040.7,556.4 1027.2,552.8 1022.6,535.7" fill="#683219" /><polygon points="1100.0,517.4 1123.0,523.4 1128.0,540.4 1109.9,551.6 1086.9,545.5 1082.0,528.4" fill="#783c1f" /><polygon points="1100.0,517.4 1100.0,549.0 1086.9,545.5 1082.0,528.4" fill="#683219" /><polygon points="605.1,612.8 627.0,619.4 630.1,636.9 611.1,647.9 589.1,641.3 586.2,623.7" fill="#783c1f" /><polygon points="605.1,612.8 605.1,646.0 589.1,641.3 586.2,623.7" fill="#683219" /><polygon points="664.2,606.5 686.3,612.9 689.6,630.4 670.7,641.4 648.6,634.9 645.4,617.4" fill="#783c1f" /><polygon points="664.2,606.5 664.2,639.5 648.6,634.9 645.4,617.4" fill="#683219" /><polygon points="723.5,600.0 745.7,606.4 749.3,623.8 730.4,634.9 708.1,628.4 704.7,610.9" fill="#783c1f" /><polygon points="723.5,600.0 723.5,632.9 708.1,628.4 704.7,610.9" fill="#683219" /><polygon points="782.8,593.3 805.2,599.7 809.0,617.1 790.2,628.2 767.8,621.8 764.2,604.3" fill="#783c1f" /><polygon points="782.8,593.3 782.8,626.1 767.8,621.8 764.2,604.3" fill="#683219" /><polygon points="842.2,586.6 864.7,592.9 868.8,610.3 850.1,621.4 827.5,615.0 823.7,597.6" fill="#783c1f" /><polygon points="842.2,586.6 842.2,619.2 827.5,615.0 823.7,597.6" fill="#683219" /><polygon points="901.7,579.7 924.4,586.0 928.7,603.3 910.1,614.5 887.4,608.2 883.3,590.7" fill="#783c1f" /><polygon points="901.7,579.7 901.7,612.2 887.4,608.2 883.3,590.7" fill="#683219" /><polygon points="961.4,572.7 984.2,578.9 988.7,596.3 970.2,607.5 947.3,601.2 943.0,583.8" fill="#783c1f" /><polygon points="961.4,572.7 961.4,605.0 947.3,601.2 943.0,583.8" fill="#683219" /><polygon points="1021.1,565.5 1044.0,571.7 1048.7,589.1 1030.3,600.3 1007.3,594.0 1002.7,576.7" fill="#783c1f" /><polygon points="1021.1,565.5 1021.1,597.8 1007.3,594.0 1002.7,576.7" fill="#683219" /><polygon points="1080.9,558.3 1103.9,564.4 1108.9,581.7 1090.6,593.0 1067.4,586.8 1062.6,569.4" fill="#783c1f" /><polygon points="1080.9,558.3 1080.9,590.4 1067.4,586.8 1062.6,569.4" fill="#683219" /><polygon points="1140.7,550.9 1164.0,556.9 1169.2,574.3 1150.9,585.5 1127.6,579.4 1122.6,562.1" fill="#783c1f" /><polygon points="1140.7,550.9 1140.7,582.9 1127.6,579.4 1122.6,562.1" fill="#683219" /><polygon points="581.9,654.1 603.9,660.8 606.9,678.5 587.7,689.6 565.6,682.9 562.7,665.1" fill="#783c1f" /><polygon points="581.9,654.1 581.9,687.8 565.6,682.9 562.7,665.1" fill="#683219" /><polygon points="641.5,647.8 663.6,654.4 666.9,672.1 647.8,683.2 625.5,676.5 622.4,658.8" fill="#783c1f" /><polygon points="641.5,647.8 641.5,681.3 625.5,676.5 622.4,658.8" fill="#683219" /><polygon points="701.2,641.3 723.5,647.8 727.0,665.5 707.9,676.7 685.5,670.1 682.2,652.4" fill="#783c1f" /><polygon points="701.2,641.3 701.2,674.7 685.5,670.1 682.2,652.4" fill="#683219" /><polygon points="761.0,634.7 783.4,641.2 787.1,658.8 768.2,670.0 745.6,663.5 742.1,645.8" fill="#783c1f" /><polygon points="761.0,634.7 761.0,667.9 745.6,663.5 742.1,645.8" fill="#683219" /><polygon points="820.8,627.9 843.5,634.4 847.4,652.0 828.6,663.3 805.9,656.7 802.1,639.1" fill="#783c1f" /><polygon points="820.8,627.9 820.8,661.0 805.9,656.7 802.1,639.1" fill="#683219" /><polygon points="880.8,621.1 903.6,627.5 907.8,645.1 889.0,656.4 866.1,649.9 862.1,632.2" fill="#783c1f" /><polygon points="880.8,621.1 880.8,654.0 866.1,649.9 862.1,632.2" fill="#683219" /><polygon points="940.9,614.1 963.8,620.4 968.2,638.0 949.5,649.3 926.5,642.9 922.3,625.3" fill="#783c1f" /><polygon points="940.9,614.1 940.9,646.9 926.5,642.9 922.3,625.3" fill="#683219" /><polygon points="1001.0,607.0 1024.1,613.2 1028.7,630.8 1010.2,642.2 987.0,635.8 982.5,618.2" fill="#783c1f" /><polygon points="1001.0,607.0 1001.0,639.7 987.0,635.8 982.5,618.2" fill="#683219" /><polygon points="1061.3,599.7 1084.5,605.9 1089.4,623.5 1070.9,634.9 1047.6,628.6 1042.9,611.0" fill="#783c1f" /><polygon points="1061.3,599.7 1061.3,632.3 1047.6,628.6 1042.9,611.0" fill="#683219" /><polygon points="1121.6,592.3 1145.0,598.5 1150.1,616.1 1131.7,627.5 1108.2,621.2 1103.3,603.6" fill="#783c1f" /><polygon points="1121.6,592.3 1121.6,624.8 1108.2,621.2 1103.3,603.6" fill="#683219" /><ellipse cx="832.5" cy="417" rx="18" ry="13" fill="#783c1f"/><path d="M814.5,417 A18,13 0 0 1 828,404.4 L828,429.6 A18,13 0 0 1 814.5,417Z" fill="#683219"/></g>
<g clip-path="url(#chevclip)"><polygon points="793.7,212.9 815.1,219.0 818.1,234.9 793.7,228.5 781.1,235.4 777.3,223.6" fill="#6e3419" /><polygon points="843.8,208.0 865.2,214.1 868.2,230.0 843.8,223.7 831.2,230.5 827.4,218.8" fill="#6e3419" /><polygon points="893.9,203.2 915.3,209.2 918.3,225.2 893.9,218.8 881.4,225.6 877.5,213.9" fill="#6e3419" /><polygon points="944.0,198.3 965.4,204.4 968.4,220.3 944.0,214.0 931.5,220.8 927.7,209.1" fill="#6e3419" /><polygon points="994.2,193.5 1015.5,199.5 1018.6,215.4 994.2,209.1 981.6,215.9 977.8,204.2" fill="#6e3419" /><polygon points="1044.3,188.6 1065.6,194.7 1068.7,210.6 1044.3,204.2 1031.7,211.1 1027.9,199.4" fill="#6e3419" /><polygon points="1094.4,183.8 1115.7,189.8 1118.8,205.7 1094.4,199.4 1081.8,206.2 1078.0,194.5" fill="#6e3419" /><polygon points="826.7,243.4 848.2,249.5 851.2,265.4 826.7,259.1 814.1,265.9 810.3,254.2" fill="#6e3419" /><polygon points="877.3,238.4 898.8,244.4 901.8,260.4 877.3,254.0 864.7,260.9 860.9,249.1" fill="#6e3419" /><polygon points="927.9,233.3 949.4,239.4 952.4,255.4 927.9,249.0 915.2,255.9 911.4,244.1" fill="#6e3419" /><polygon points="978.5,228.3 999.9,234.4 1003.0,250.3 978.5,244.0 965.8,250.8 962.0,239.1" fill="#6e3419" /><polygon points="1029.0,223.3 1050.5,229.3 1053.5,245.3 1029.0,238.9 1016.4,245.8 1012.6,234.0" fill="#6e3419" /><polygon points="1079.6,218.2 1101.1,224.3 1104.1,240.3 1079.6,233.9 1067.0,240.8 1063.2,229.0" fill="#6e3419" /><polygon points="1130.2,213.2 1151.7,219.3 1154.7,235.2 1130.2,228.9 1117.5,235.7 1113.7,224.0" fill="#6e3419" /><polygon points="809.2,279.4 830.8,285.5 833.8,301.5 809.2,295.2 796.5,302.0 792.7,290.2" fill="#783c1f" /><polygon points="809.2,279.4 809.2,295.2 796.5,302.0 792.7,290.2" fill="#683219" /><polygon points="860.3,274.2 881.8,280.3 884.9,296.3 860.3,289.9 847.6,296.8 843.7,285.0" fill="#783c1f" /><polygon points="860.3,274.2 860.3,289.9 847.6,296.8 843.7,285.0" fill="#683219" /><polygon points="911.3,269.0 932.9,275.1 935.9,291.1 911.3,284.7 898.6,291.6 894.8,279.8" fill="#783c1f" /><polygon points="911.3,269.0 911.3,284.7 898.6,291.6 894.8,279.8" fill="#683219" /><polygon points="962.4,263.8 983.9,269.9 987.0,285.9 962.4,279.5 949.7,286.4 945.8,274.6" fill="#783c1f" /><polygon points="962.4,263.8 962.4,279.5 949.7,286.4 945.8,274.6" fill="#683219" /><polygon points="1013.4,258.6 1034.9,264.7 1038.0,280.7 1013.4,274.3 1000.7,281.2 996.9,269.4" fill="#783c1f" /><polygon points="1013.4,258.6 1013.4,274.3 1000.7,281.2 996.9,269.4" fill="#683219" /><polygon points="1064.4,253.4 1086.0,259.5 1089.0,275.5 1064.4,269.1 1051.7,276.0 1047.9,264.2" fill="#783c1f" /><polygon points="1064.4,253.4 1064.4,269.1 1051.7,276.0 1047.9,264.2" fill="#683219" /><polygon points="1115.5,248.2 1137.0,254.3 1140.1,270.3 1115.5,263.9 1102.8,270.8 1098.9,259.0" fill="#783c1f" /><polygon points="1115.5,248.2 1115.5,263.9 1102.8,270.8 1098.9,259.0" fill="#683219" /><polygon points="842.8,310.7 864.5,316.9 867.5,333.0 842.8,326.5 830.1,333.5 826.2,321.6" fill="#783c1f" /><polygon points="842.8,310.7 842.8,326.5 830.1,333.5 826.2,321.6" fill="#683219" /><polygon points="894.3,305.4 916.0,311.5 919.0,327.6 894.3,321.2 881.6,328.1 877.7,316.2" fill="#783c1f" /><polygon points="894.3,305.4 894.3,321.2 881.6,328.1 877.7,316.2" fill="#683219" /><polygon points="945.8,300.0 967.5,306.1 970.5,322.2 945.8,315.8 933.1,322.7 929.2,310.8" fill="#783c1f" /><polygon points="945.8,300.0 945.8,315.8 933.1,322.7 929.2,310.8" fill="#683219" /><polygon points="997.3,294.6 1019.0,300.7 1022.0,316.8 997.3,310.4 984.6,317.3 980.7,305.5" fill="#783c1f" /><polygon points="997.3,294.6 997.3,310.4 984.6,317.3 980.7,305.5" fill="#683219" /><polygon points="1048.8,289.2 1070.5,295.3 1073.5,311.4 1048.8,305.0 1036.1,311.9 1032.2,300.1" fill="#783c1f" /><polygon points="1048.8,289.2 1048.8,305.0 1036.1,311.9 1032.2,300.1" fill="#683219" /><polygon points="1100.4,283.8 1122.0,289.9 1125.1,306.0 1100.4,299.6 1087.6,306.5 1083.8,294.7" fill="#783c1f" /><polygon points="1100.4,283.8 1100.4,299.6 1087.6,306.5 1083.8,294.7" fill="#683219" /><polygon points="1151.9,278.4 1173.5,284.6 1176.6,300.7 1151.9,294.2 1139.1,301.2 1135.3,289.3" fill="#783c1f" /><polygon points="1151.9,278.4 1151.9,294.2 1139.1,301.2 1135.3,289.3" fill="#683219" /><polygon points="824.9,348.0 846.7,354.1 849.7,370.3 824.9,363.8 812.1,370.8 808.3,358.9" fill="#783c1f" /><polygon points="824.9,348.0 824.9,363.8 812.1,370.8 808.3,358.9" fill="#683219" /><polygon points="876.9,342.4 898.6,348.6 901.7,364.7 876.9,358.3 864.1,365.2 860.2,353.3" fill="#783c1f" /><polygon points="876.9,342.4 876.9,358.3 864.1,365.2 860.2,353.3" fill="#683219" /><polygon points="928.9,336.8 950.6,343.0 953.7,359.2 928.9,352.7 916.1,359.7 912.2,347.8" fill="#783c1f" /><polygon points="928.9,336.8 928.9,352.7 916.1,359.7 912.2,347.8" fill="#683219" /><polygon points="980.9,331.3 1002.6,337.4 1005.7,353.6 980.9,347.2 968.1,354.1 964.2,342.2" fill="#783c1f" /><polygon points="980.9,331.3 980.9,347.2 968.1,354.1 964.2,342.2" fill="#683219" /><polygon points="1032.8,325.7 1054.6,331.9 1057.6,348.0 1032.8,341.6 1020.0,348.5 1016.2,336.6" fill="#783c1f" /><polygon points="1032.8,325.7 1032.8,341.6 1020.0,348.5 1016.2,336.6" fill="#683219" /><polygon points="1084.8,320.2 1106.5,326.3 1109.6,342.5 1084.8,336.0 1072.0,343.0 1068.1,331.1" fill="#783c1f" /><polygon points="1084.8,320.2 1084.8,336.0 1072.0,343.0 1068.1,331.1" fill="#683219" /><polygon points="1136.8,314.6 1158.5,320.8 1161.6,336.9 1136.8,330.5 1124.0,337.4 1120.1,325.5" fill="#783c1f" /><polygon points="1136.8,314.6 1136.8,330.5 1124.0,337.4 1120.1,325.5" fill="#683219" /><polygon points="859.1,380.1 880.9,386.3 884.0,402.6 859.1,396.1 846.2,403.1 842.4,391.1" fill="#783c1f" /><polygon points="859.1,380.1 859.1,396.1 846.2,403.1 842.4,391.1" fill="#683219" /><polygon points="911.5,374.4 933.3,380.6 936.4,396.8 911.5,390.3 898.7,397.3 894.8,385.4" fill="#783c1f" /><polygon points="911.5,374.4 911.5,390.3 898.7,397.3 894.8,385.4" fill="#683219" /><polygon points="964.0,368.7 985.8,374.8 988.9,391.1 964.0,384.6 951.1,391.6 947.2,379.6" fill="#783c1f" /><polygon points="964.0,368.7 964.0,384.6 951.1,391.6 947.2,379.6" fill="#683219" /><polygon points="1016.4,362.9 1038.2,369.1 1041.3,385.3 1016.4,378.9 1003.6,385.8 999.7,373.9" fill="#783c1f" /><polygon points="1016.4,362.9 1016.4,378.9 1003.6,385.8 999.7,373.9" fill="#683219" /><polygon points="1068.8,357.2 1090.7,363.4 1093.7,379.6 1068.8,373.1 1056.0,380.1 1052.1,368.2" fill="#783c1f" /><polygon points="1068.8,357.2 1068.8,373.1 1056.0,380.1 1052.1,368.2" fill="#683219" /><polygon points="1121.3,351.5 1143.1,357.6 1146.2,373.9 1121.3,367.4 1108.4,374.4 1104.6,362.4" fill="#783c1f" /><polygon points="1121.3,351.5 1121.3,367.4 1108.4,374.4 1104.6,362.4" fill="#683219" /><polygon points="1173.7,345.7 1195.5,351.9 1198.6,368.1 1173.7,361.7 1160.9,368.6 1157.0,356.7" fill="#783c1f" /><polygon points="1173.7,345.7 1173.7,361.7 1160.9,368.6 1157.0,356.7" fill="#683219" /><polygon points="840.8,418.6 862.7,424.8 865.8,441.1 840.8,434.6 827.9,441.6 824.0,429.6" fill="#783c1f" /><polygon points="840.8,418.6 840.8,434.6 827.9,441.6 824.0,429.6" fill="#683219" /><polygon points="893.8,412.7 915.7,418.9 918.8,435.2 893.8,428.7 880.9,435.7 877.0,423.7" fill="#783c1f" /><polygon points="893.8,412.7 893.8,428.7 880.9,435.7 877.0,423.7" fill="#683219" /><polygon points="946.7,406.7 968.6,412.9 971.7,429.2 946.7,422.7 933.8,429.7 929.9,417.7" fill="#783c1f" /><polygon points="946.7,406.7 946.7,422.7 933.8,429.7 929.9,417.7" fill="#683219" /><polygon points="999.6,400.8 1021.5,407.0 1024.6,423.3 999.6,416.8 986.7,423.8 982.8,411.8" fill="#783c1f" /><polygon points="999.6,400.8 999.6,416.8 986.7,423.8 982.8,411.8" fill="#683219" /><polygon points="1052.5,394.9 1074.4,401.1 1077.5,417.4 1052.5,410.9 1039.6,417.9 1035.7,405.9" fill="#783c1f" /><polygon points="1052.5,394.9 1052.5,410.9 1039.6,417.9 1035.7,405.9" fill="#683219" /><polygon points="1105.4,389.0 1127.3,395.2 1130.4,411.5 1105.4,405.0 1092.5,412.0 1088.6,400.0" fill="#783c1f" /><polygon points="1105.4,389.0 1105.4,405.0 1092.5,412.0 1088.6,400.0" fill="#683219" /><polygon points="1158.3,383.1 1180.2,389.3 1183.3,405.6 1158.3,399.1 1145.4,406.1 1141.5,394.1" fill="#783c1f" /><polygon points="1158.3,383.1 1158.3,399.1 1145.4,406.1 1141.5,394.1" fill="#683219" /><polygon points="875.6,451.6 897.5,457.8 900.7,474.2 875.6,467.7 862.6,474.7 858.7,462.6" fill="#783c1f" /><polygon points="875.6,451.6 875.6,467.7 862.6,474.7 858.7,462.6" fill="#683219" /><polygon points="928.9,445.5 950.9,451.7 954.0,468.1 928.9,461.6 916.0,468.6 912.1,456.6" fill="#783c1f" /><polygon points="928.9,445.5 928.9,461.6 916.0,468.6 912.1,456.6" fill="#683219" /><polygon points="982.3,439.4 1004.3,445.6 1007.4,462.0 982.3,455.5 969.4,462.5 965.4,450.5" fill="#783c1f" /><polygon points="982.3,439.4 982.3,455.5 969.4,462.5 965.4,450.5" fill="#683219" /><polygon points="1035.7,433.3 1057.7,439.6 1060.8,455.9 1035.7,449.4 1022.7,456.4 1018.8,444.4" fill="#783c1f" /><polygon points="1035.7,433.3 1035.7,449.4 1022.7,456.4 1018.8,444.4" fill="#683219" /><polygon points="1089.0,427.2 1111.0,433.5 1114.1,449.8 1089.0,443.3 1076.1,450.3 1072.2,438.3" fill="#783c1f" /><polygon points="1089.0,427.2 1089.0,443.3 1076.1,450.3 1072.2,438.3" fill="#683219" /><polygon points="1142.4,421.2 1164.4,427.4 1167.5,443.7 1142.4,437.2 1129.5,444.2 1125.6,432.2" fill="#783c1f" /><polygon points="1142.4,421.2 1142.4,437.2 1129.5,444.2 1125.6,432.2" fill="#683219" /><polygon points="1195.8,415.1 1217.8,421.3 1220.9,437.7 1195.8,431.1 1182.8,438.2 1178.9,426.1" fill="#783c1f" /><polygon points="1195.8,415.1 1195.8,431.1 1182.8,438.2 1178.9,426.1" fill="#683219" /><polygon points="857.0,491.2 879.0,497.5 882.2,513.9 857.0,507.4 843.9,514.4 840.0,502.3" fill="#783c1f" /><polygon points="857.0,491.2 857.0,507.4 843.9,514.4 840.0,502.3" fill="#683219" /><polygon points="910.8,485.0 932.9,491.2 936.0,507.7 910.8,501.1 897.8,508.2 893.9,496.1" fill="#783c1f" /><polygon points="910.8,485.0 910.8,501.1 897.8,508.2 893.9,496.1" fill="#683219" /><polygon points="964.6,478.7 986.7,485.0 989.8,501.4 964.6,494.8 951.6,501.9 947.7,489.8" fill="#783c1f" /><polygon points="964.6,478.7 964.6,494.8 951.6,501.9 947.7,489.8" fill="#683219" /><polygon points="1018.5,472.4 1040.5,478.7 1043.7,495.1 1018.5,488.6 1005.5,495.6 1001.5,483.5" fill="#783c1f" /><polygon points="1018.5,472.4 1018.5,488.6 1005.5,495.6 1001.5,483.5" fill="#683219" /><polygon points="1072.3,466.2 1094.4,472.4 1097.5,488.9 1072.3,482.3 1059.3,489.4 1055.4,477.3" fill="#783c1f" /><polygon points="1072.3,466.2 1072.3,482.3 1059.3,489.4 1055.4,477.3" fill="#683219" /><polygon points="1126.1,459.9 1148.2,466.2 1151.3,482.6 1126.1,476.0 1113.1,483.1 1109.2,471.0" fill="#783c1f" /><polygon points="1126.1,459.9 1126.1,476.0 1113.1,483.1 1109.2,471.0" fill="#683219" /><polygon points="1180.0,453.6 1202.1,459.9 1205.2,476.3 1180.0,469.8 1167.0,476.8 1163.0,464.7" fill="#783c1f" /><polygon points="1180.0,453.6 1180.0,469.8 1167.0,476.8 1163.0,464.7" fill="#683219" /><polygon points="892.2,525.1 914.4,531.4 917.5,547.9 892.2,541.3 879.2,548.4 875.2,536.2" fill="#783c1f" /><polygon points="892.2,525.1 892.2,541.3 879.2,548.4 875.2,536.2" fill="#683219" /><polygon points="946.5,518.7 968.7,524.9 971.8,541.4 946.5,534.9 933.5,542.0 929.5,529.8" fill="#783c1f" /><polygon points="946.5,518.7 946.5,534.9 933.5,542.0 929.5,529.8" fill="#683219" /><polygon points="1000.8,512.2 1023.0,518.5 1026.1,535.0 1000.8,528.4 987.8,535.5 983.8,523.4" fill="#783c1f" /><polygon points="1000.8,512.2 1000.8,528.4 987.8,535.5 983.8,523.4" fill="#683219" /><polygon points="1055.1,505.8 1077.3,512.1 1080.4,528.6 1055.1,522.0 1042.1,529.1 1038.1,516.9" fill="#783c1f" /><polygon points="1055.1,505.8 1055.1,522.0 1042.1,529.1 1038.1,516.9" fill="#683219" /><polygon points="1109.4,499.3 1131.6,505.6 1134.7,522.1 1109.4,515.5 1096.4,522.6 1092.4,510.5" fill="#783c1f" /><polygon points="1109.4,499.3 1109.4,515.5 1096.4,522.6 1092.4,510.5" fill="#683219" /><polygon points="1163.8,492.9 1185.9,499.2 1189.1,515.7 1163.8,509.1 1150.7,516.2 1146.8,504.0" fill="#783c1f" /><polygon points="1163.8,492.9 1163.8,509.1 1150.7,516.2 1146.8,504.0" fill="#683219" /><polygon points="1218.1,486.5 1240.2,492.7 1243.4,509.2 1218.1,502.7 1205.0,509.7 1201.1,497.6" fill="#783c1f" /><polygon points="1218.1,486.5 1218.1,502.7 1205.0,509.7 1201.1,497.6" fill="#683219" /><polygon points="873.3,566.0 895.5,572.3 898.7,588.8 873.3,582.2 860.1,589.3 856.2,577.1" fill="#783c1f" /><polygon points="873.3,566.0 873.3,582.2 860.1,589.3 856.2,577.1" fill="#683219" /><polygon points="928.0,559.3 950.3,565.6 953.4,582.2 928.0,575.6 914.9,582.7 911.0,570.5" fill="#783c1f" /><polygon points="928.0,559.3 928.0,575.6 914.9,582.7 911.0,570.5" fill="#683219" /><polygon points="982.8,552.7 1005.0,559.0 1008.2,575.6 982.8,569.0 969.7,576.1 965.7,563.9" fill="#783c1f" /><polygon points="982.8,552.7 982.8,569.0 969.7,576.1 965.7,563.9" fill="#683219" /><polygon points="1037.6,546.1 1059.8,552.4 1063.0,569.0 1037.6,562.4 1024.5,569.5 1020.5,557.3" fill="#783c1f" /><polygon points="1037.6,546.1 1037.6,562.4 1024.5,569.5 1020.5,557.3" fill="#683219" /><polygon points="1092.3,539.5 1114.6,545.8 1117.7,562.3 1092.3,555.7 1079.2,562.8 1075.3,550.7" fill="#783c1f" /><polygon points="1092.3,539.5 1092.3,555.7 1079.2,562.8 1075.3,550.7" fill="#683219" /><polygon points="1147.1,532.9 1169.4,539.2 1172.5,555.7 1147.1,549.1 1134.0,556.2 1130.0,544.0" fill="#783c1f" /><polygon points="1147.1,532.9 1147.1,549.1 1134.0,556.2 1130.0,544.0" fill="#683219" /><polygon points="1201.9,526.2 1224.1,532.5 1227.3,549.1 1201.9,542.5 1188.8,549.6 1184.8,537.4" fill="#783c1f" /><polygon points="1201.9,526.2 1201.9,542.5 1188.8,549.6 1184.8,537.4" fill="#683219" /><polygon points="909.1,600.7 931.4,607.0 934.6,623.6 909.1,617.0 895.9,624.1 892.0,611.9" fill="#783c1f" /><polygon points="909.1,600.7 909.1,617.0 895.9,624.1 892.0,611.9" fill="#683219" /><polygon points="964.3,593.9 986.7,600.2 989.8,616.8 964.3,610.2 951.2,617.3 947.2,605.1" fill="#783c1f" /><polygon points="964.3,593.9 964.3,610.2 951.2,617.3 947.2,605.1" fill="#683219" /><polygon points="1019.6,587.1 1041.9,593.4 1045.1,610.0 1019.6,603.4 1006.4,610.6 1002.4,598.3" fill="#783c1f" /><polygon points="1019.6,587.1 1019.6,603.4 1006.4,610.6 1002.4,598.3" fill="#683219" /><polygon points="1074.8,580.3 1097.1,586.6 1100.3,603.2 1074.8,596.6 1061.6,603.8 1057.7,591.5" fill="#783c1f" /><polygon points="1074.8,580.3 1074.8,596.6 1061.6,603.8 1057.7,591.5" fill="#683219" /><polygon points="1130.0,573.5 1152.4,579.8 1155.5,596.5 1130.0,589.8 1116.9,597.0 1112.9,584.7" fill="#783c1f" /><polygon points="1130.0,573.5 1130.0,589.8 1116.9,597.0 1112.9,584.7" fill="#683219" /><polygon points="1185.3,566.7 1207.6,573.0 1210.8,589.7 1185.3,583.0 1172.1,590.2 1168.1,577.9" fill="#783c1f" /><polygon points="1185.3,566.7 1185.3,583.0 1172.1,590.2 1168.1,577.9" fill="#683219" /><polygon points="1240.5,559.9 1262.9,566.2 1266.0,582.9 1240.5,576.2 1227.4,583.4 1223.4,571.1" fill="#783c1f" /><polygon points="1240.5,559.9 1240.5,576.2 1227.4,583.4 1223.4,571.1" fill="#683219" /><polygon points="889.8,642.7 912.2,649.1 915.4,665.8 889.8,659.1 876.5,666.3 872.5,654.0" fill="#783c1f" /><polygon points="889.8,642.7 889.8,659.1 876.5,666.3 872.5,654.0" fill="#683219" /><polygon points="945.5,635.7 967.9,642.1 971.1,658.8 945.5,652.1 932.2,659.3 928.3,647.0" fill="#783c1f" /><polygon points="945.5,635.7 945.5,652.1 932.2,659.3 928.3,647.0" fill="#683219" /><polygon points="1001.2,628.8 1023.6,635.1 1026.8,651.8 1001.2,645.2 987.9,652.3 984.0,640.0" fill="#783c1f" /><polygon points="1001.2,628.8 1001.2,645.2 987.9,652.3 984.0,640.0" fill="#683219" /><polygon points="1056.9,621.8 1079.3,628.2 1082.5,644.8 1056.9,638.2 1043.7,645.4 1039.7,633.1" fill="#783c1f" /><polygon points="1056.9,621.8 1056.9,638.2 1043.7,645.4 1039.7,633.1" fill="#683219" /><polygon points="1112.6,614.8 1135.0,621.2 1138.2,637.9 1112.6,631.2 1099.4,638.4 1095.4,626.1" fill="#783c1f" /><polygon points="1112.6,614.8 1112.6,631.2 1099.4,638.4 1095.4,626.1" fill="#683219" /><polygon points="1168.3,607.9 1190.7,614.2 1193.9,630.9 1168.3,624.2 1155.1,631.4 1151.1,619.1" fill="#783c1f" /><polygon points="1168.3,607.9 1168.3,624.2 1155.1,631.4 1151.1,619.1" fill="#683219" /><polygon points="1224.0,600.9 1246.4,607.2 1249.6,623.9 1224.0,617.3 1210.8,624.4 1206.8,612.2" fill="#783c1f" /><polygon points="1224.0,600.9 1224.0,617.3 1210.8,624.4 1206.8,612.2" fill="#683219" /></g>
<path d="M928.5,236.0 C929.6,246.9 931.1,270.1 935.0,301.6 C938.9,333.1 947.8,385.3 952.0,425.0 C956.2,464.7 957.9,507.2 960.0,540.0 C962.1,572.8 963.8,608.3 964.5,622.0" fill="none" stroke="#a9532a" stroke-width="5" opacity="0.4"/>
<path d="M932.0,236.7 C933.2,247.5 935.4,270.2 939.5,301.6 C943.6,333.0 952.5,385.3 956.8,425.0 C961.0,464.7 962.8,506.8 965.0,540.0 C967.2,573.2 969.2,610.0 970.0,624.0" fill="none" stroke="#8f4522" stroke-width="1.8"/>
<path d="M411.5,0 H1087.5 V46.5 Q1087.5,49.5 1084.5,49.5 H414.5 Q411.5,49.5 411.5,46.5Z" fill="rgba(0,0,0,0.44)"/>
<path d="M418.5,17.5 L428.5,7.5 H454.5 V31 M418.5,17.5 H443.5 L454.5,7.5 M443.5,17.5 V27 M418.5,17.5 V42.5 H437" fill="none" stroke="#ffffff" stroke-width="1.45" stroke-linejoin="round" />
<circle cx="446.5" cy="35" r="7.8" fill="none" stroke="#ffffff" stroke-width="1.45" stroke-linejoin="round" /><path d="M446.5,27.2 V42.8 M438.7,35 H454.3" fill="none" stroke="#ffffff" stroke-width="1.4" stroke-linejoin="round" />
<path d="M462.5,17.5 L472.5,7.5 H498.5 V31 M462.5,17.5 H487.5 L498.5,7.5 M487.5,17.5 V27 M462.5,17.5 V42.5 H481" fill="none" stroke="#8c8c8c" stroke-width="1.3" stroke-linejoin="round" stroke-dasharray='3,2.5'/>
<circle cx="490.5" cy="35" r="7.8" fill="none" stroke="#8c8c8c" stroke-width="1.3" stroke-linejoin="round" /><path d="M482.7,35 H498.3" fill="none" stroke="#8c8c8c" stroke-width="1.3" stroke-linejoin="round" />
<path d="M509,9.5 H540 V12.3 H509Z M518.5,9.5 L520.5,7 H528.5 L530.5,9.5 M510.5,15.2 H538.8 L536.6,42.7 H512.6Z" fill="none" stroke="#ffffff" stroke-width="1.45" stroke-linejoin="round" />
<rect x="550.3" y="7.2" width="36.5" height="35.8" fill="none" stroke="#ffffff" stroke-width="1.45" stroke-linejoin="round" /><rect x="555.5" y="12.1" width="25.7" height="10.5" fill="none" stroke="#ffffff" stroke-width="1.45" stroke-linejoin="round" /><rect x="555.5" y="27.3" width="8.6" height="10.5" fill="none" stroke="#ffffff" stroke-width="1.45" stroke-linejoin="round" /><rect x="568.3" y="27.3" width="12.9" height="10.5" fill="none" stroke="#ffffff" stroke-width="1.45" stroke-linejoin="round" />
<path d="M616.3,32.3 H603.7 V7.3 H618.7 L624.3,13 V14.3 M618.7,7.3 V12.3 H624.3 M616.5,15.3 L613.7,14 L608.3,17.2 V23.4 L613.7,26.5 L616.5,25" fill="none" stroke="#8c8c8c" stroke-width="1.3" stroke-linejoin="round" />
<path d="M618.7,17.3 H633.7 L639.3000000000001,22.9 V42.3 H618.7 Z M633.7,17.3 V22.9 H639.3000000000001 M628.7,24.2 L634.0,27.2 L634.0,33.4 L628.7,36.4 L623.4,33.4 L623.4,27.2Z" fill="none" stroke="#8c8c8c" stroke-width="1.3" stroke-linejoin="round" />
<path d="M652.7,9.3 H647.7 V37.7 H660 M668.3,9.3 H673 V14.3" fill="none" stroke="#8c8c8c" stroke-width="1.3" stroke-linejoin="round" /><rect x="652.7" y="7.3" width="15.6" height="5.4" rx="1.5" fill="none" stroke="#8c8c8c" stroke-width="1.3" stroke-linejoin="round" />
<path d="M662.7,17.3 H677.7 L683.3000000000001,22.9 V42.3 H662.7 Z M677.7,17.3 V22.9 H683.3000000000001 M672.7,24.2 L678.0,27.2 L678.0,33.4 L672.7,36.4 L667.4,33.4 L667.4,27.2Z" fill="none" stroke="#8c8c8c" stroke-width="1.3" stroke-linejoin="round" />
<circle cx="718.1" cy="24.5" r="17.8" fill="none" stroke="#8c8c8c" stroke-width="1.3" stroke-linejoin="round" stroke-dasharray='4.6,3.4'/><path d="M718.1,14 V35 M707.6,24.5 H728.6" fill="none" stroke="#8c8c8c" stroke-width="1.4" stroke-linejoin="round" />
<circle cx="762.2" cy="24.5" r="17.8" fill="none" stroke="#8c8c8c" stroke-width="1.3" stroke-linejoin="round" stroke-dasharray='4.6,3.4'/><path d="M751.7,24.5 H772.7" fill="none" stroke="#8c8c8c" stroke-width="1.4" stroke-linejoin="round" />
<path d="M807.7,32.7 H797.2 V7.2 H824 V16.8" fill="none" stroke="#8c8c8c" stroke-width="1.3" stroke-linejoin="round" /><rect x="807.7" y="16.8" width="25.6" height="25.9" fill="none" stroke="#8c8c8c" stroke-width="1.3" stroke-linejoin="round" />
<rect x="816" y="23.5" width="9" height="14" rx="4.5" fill="none" stroke="#8c8c8c" stroke-width="1.3" stroke-linejoin="round" />
<path d="M852,32.7 H841.5 V7.2 H868.3 V16.8" fill="none" stroke="#8c8c8c" stroke-width="1.3" stroke-linejoin="round" /><rect x="852" y="16.8" width="25.6" height="25.9" fill="none" stroke="#8c8c8c" stroke-width="1.3" stroke-linejoin="round" />
<path d="M861,38 V23.5 H866.5 A4,4 0 0 1 866.5,31.5 H861" fill="none" stroke="#8c8c8c" stroke-width="1.3" stroke-linejoin="round" />
<circle cx="908.5" cy="21.5" r="14.2" fill="none" stroke="#ffffff" stroke-width="1.45" stroke-linejoin="round" /><path d="M908.5,14.3 L914.7,17.9 L914.7,25.1 L908.5,28.7 L902.3,25.1 L902.3,17.9Z" fill="none" stroke="#ffffff" stroke-width="1.4" stroke-linejoin="round" /><path d="M918.5,31.5 L929.5,41.5" fill="none" stroke="#ffffff" stroke-width="2.6" stroke-linejoin="round" stroke-linecap='round'/>
<path d="M948,8.2 H983" stroke="#8e8e8e" stroke-width="1.4"/>
<path d="M948,14.3 H983" stroke="#8e8e8e" stroke-width="2.0"/>
<path d="M948,20.8 H983" stroke="#8e8e8e" stroke-width="2.7"/>
<path d="M948,27 H983" stroke="#8e8e8e" stroke-width="3.4"/>
<path d="M948,33.5 H983" stroke="#8e8e8e" stroke-width="4.1"/>
<path d="M948,39.9 H983" stroke="#8e8e8e" stroke-width="4.8"/>
<path d="M1014,12.5 L1002,19.8 L1014,27 M1002.5,19.8 H1029 A8.6,8.6 0 0 1 1029,37 H1014" fill="none" stroke="#ffffff" stroke-width="1.8" stroke-linejoin="round" />
<path d="M1069,12.5 L1081,19.8 L1069,27 M1080.5,19.8 H1054 A8.6,8.6 0 0 0 1054,37 H1069" fill="none" stroke="#8c8c8c" stroke-width="1.5" stroke-linejoin="round" />
<path d="M0,206.5 H70.5 Q74,206.5 74,210 V759 Q74,762.5 70.5,762.5 H0Z" fill="rgba(0,0,0,0.44)"/>
<rect x="26.5" y="232.5" width="21" height="21.5" rx="1.5" fill="none" stroke="#8a8a8a" stroke-width="1.5" stroke-linejoin="round" />
<path d="M37,214.8 L43.3,225 H30.7Z M37,271.5 L43.3,261.3 H30.7Z M8.5,243.3 L18.8,236.7 V249.9Z M65.5,243.3 L55.2,236.7 V249.9Z" fill="none" stroke="#8a8a8a" stroke-width="1.5" stroke-linejoin="round" />
<rect x="8.5" y="284" width="57.2" height="57.3" rx="1.5" fill="none" stroke="#8a8a8a" stroke-width="1.5" stroke-linejoin="round" stroke-dasharray='11.6,6.3' stroke-dashoffset='5'/>
<rect x="32.5" y="308.5" width="33.2" height="32.8" rx="1.5" fill="none" stroke="#8a8a8a" stroke-width="1.5" stroke-linejoin="round" />
<path d="M16,292.5 H25 L22,295.5 L29,302.5 L26,305.5 L19,298.5 L16,301.5Z" fill="#8a8a8a"/>
<path d="M38.4,367.5 L59.5,388.5 L38.4,409.5 L17.3,388.5Z" fill="none" stroke="#8a8a8a" stroke-width="1.5" stroke-linejoin="round" />
<path d="M10.5,388.5 A24,23 0 0 1 56,362.5" fill="none" stroke="#8a8a8a" stroke-width="1.5" stroke-linejoin="round" /><path d="M51.5,369 L62,357.5 L64.5,370.5Z" fill="none" stroke="#8a8a8a" stroke-width="1.5" stroke-linejoin="round" />
<path d="M31.5,422.3 L65,431 L56,464.5 L22.5,455.5Z" fill="none" stroke="#8a8a8a" stroke-width="1.5" stroke-linejoin="round" />
<path d="M21.5,448.5 Q14,452 13.5,464 M9.5,460.5 L13.5,470 L18,460.5Z" fill="none" stroke="#8a8a8a" stroke-width="1.3" stroke-linejoin="round" /><rect x="9" y="473.8" width="56" height="4" rx="2" fill="none" stroke="#8a8a8a" stroke-width="1.3" stroke-linejoin="round" />
<rect x="13.2" y="491" width="47.8" height="21.7" rx="1.5" fill="none" stroke="#8a8a8a" stroke-width="1.5" stroke-linejoin="round" /><rect x="13.2" y="525.7" width="47.8" height="21.7" rx="1.5" fill="none" stroke="#8a8a8a" stroke-width="1.5" stroke-linejoin="round" />
<path d="M8.7,519.5 H65" fill="none" stroke="#8a8a8a" stroke-width="1.5" stroke-linejoin="round" stroke-dasharray='5.5,4'/>
<path d="M12.4,559.7 V564 L37,579.8 L61,564 V559.7" fill="none" stroke="#8a8a8a" stroke-width="1.5" stroke-linejoin="round" />
<path d="M24.5,576.5 V597 Q24.5,599.5 27,599.5 H31 Q33.5,599.5 33.5,602 V613 Q33.5,617.5 37,617.5 Q40.5,617.5 40.5,613 V602 Q40.5,599.5 43,599.5 H47 Q49.5,599.5 49.5,597 V576.5 M28.5,574 V595 M32.5,576.5 V595 M37,579 V595 M41.5,576.5 V595 M45.5,574 V595" fill="none" stroke="#8a8a8a" stroke-width="1.2" stroke-linejoin="round" />
<path d="M9,645 L37,629.5 L65.3,641 V674.5 L37,686.5 L9,671.5Z M9,645 L37,657 L65.3,641 M37,657 V686.5" fill="none" stroke="#8a8a8a" stroke-width="1.5" stroke-linejoin="round" />
<path d="M53,650 L57,648 M49,655 L55,652 M45,663 L50,660 M41,670 L47,667 M47,672 L53,669" fill="none" stroke="#8a8a8a" stroke-width="1.2" stroke-linejoin="round" />
<rect x="13.2" y="716" width="47.8" height="21.5" rx="1.5" fill="none" stroke="#8a8a8a" stroke-width="1.5" stroke-linejoin="round" />
<path d="M17.5,716 V724 M22.4,716 V721 M27.3,716 V724 M32.2,716 V721 M37.1,716 V724 M42.0,716 V721 M46.9,716 V724 M51.8,716 V721 M56.7,716 V724" fill="none" stroke="#8a8a8a" stroke-width="1.2" stroke-linejoin="round" />
<path d="M0,896 H135.5 Q138.5,896 138.5,899 V970 H0Z" fill="rgba(0,0,0,0.44)"/>
<rect x="5" y="901" width="64" height="64" fill="#222222"/>
<path d="M9.2,920.2 L25.8,905.2 H65 L50.6,920.2Z M9.2,920.2 V961 H50.6 V920.2 M65,905.2 V946.5 L50.6,961" fill="none" stroke="#ffffff" stroke-width="1.2" stroke-linejoin="round" />
<path d="M74,920.5 L90.8,906 H130 L115,920.5Z M74,925.8 H115 L130,911.3 M74,930.8 H115 L130,916.3 M74,935.8 H115 L130,921.3 M74,940.8 H115 L130,926.3 M74,945.8 H115 L130,931.3 M74,950.8 H115 L130,936.3 M74,955.8 H115 L130,941.3 M74,960.8 H115 L130,946.3" fill="none" stroke="#ffffff" stroke-width="1.3" stroke-linejoin="round" />
</svg>
<div style="position:absolute;left:0;top:0;width:4000px;height:600px;transform-origin:0 0;transform:matrix3d(0.47992756,-0.049294189,0,1.0166333e-05,0.021802994,0.30976834,0,-7.1800312e-05,0,0,1,0,282.07424,746.14508,0,1);pointer-events:none">
<svg width="4000" height="600" style="position:absolute;left:0;top:0" font-family="Liberation Sans" font-weight="normal" fill="#ffffff" stroke="#ffffff" stroke-width="2.8" stroke-linejoin="round">
<text transform="translate(1299.5,183) scale(0.958,1)" font-size="88">ORIGINAL PRUSA i3</text>
<text transform="translate(2130,181) scale(1.12,1)" font-size="57" letter-spacing="2">MK3</text>
<text transform="translate(1936,261.4) scale(0.98,1)" font-size="65.8">by Josef Prusa</text>
</svg></div>
</div></body></html>
